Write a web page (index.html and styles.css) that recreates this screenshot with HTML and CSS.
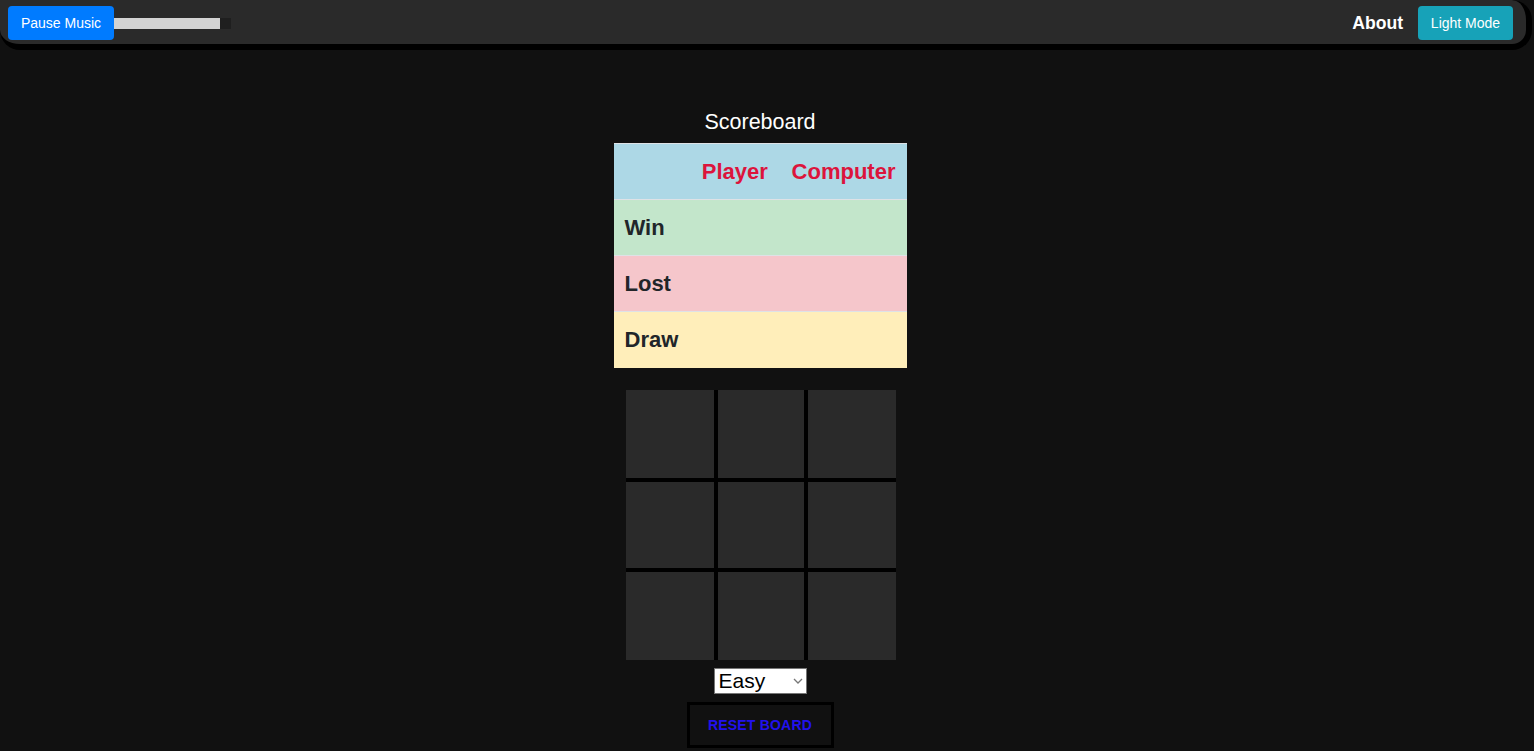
FILE: index.html
```html
<!DOCTYPE html>
<html lang="en">
<head>
<meta charset="utf-8">
<title>Tic Tac Toe</title>
<link rel="stylesheet" href="styles.css">
</head>
<body>
<nav class="navbar">
  <div class="nav-left">
    <button class="btn btn-music">Pause Music</button>
    <div class="volume"><div class="volume-fill"></div></div>
  </div>
  <div class="nav-right">
    <a class="about" href="#">About</a>
    <button class="btn btn-mode">Light Mode</button>
  </div>
</nav>
<main class="main">
  <h2 class="score-title">Scoreboard</h2>
  <table class="scoreboard">
    <thead>
      <tr class="row-head"><th></th><th>Player</th><th>Computer</th></tr>
    </thead>
    <tbody>
      <tr class="row-win"><td>Win</td><td></td><td></td></tr>
      <tr class="row-lost"><td>Lost</td><td></td><td></td></tr>
      <tr class="row-draw"><td>Draw</td><td></td><td></td></tr>
    </tbody>
  </table>
  <div class="board">
    <div class="cell c-tl"></div><div class="cell c-tm"></div><div class="cell c-tr"></div>
    <div class="cell c-ml"></div><div class="cell c-mm"></div><div class="cell c-mr"></div>
    <div class="cell c-bl"></div><div class="cell c-bm"></div><div class="cell c-br"></div>
  </div>
  <div class="select-wrap">
    <select class="difficulty">
      <option>Easy</option>
      <option>Medium</option>
      <option>Hard</option>
    </select>
    <svg class="chev" width="10" height="6" viewBox="0 0 10 6"><path d="M1 1 L5 5 L9 1" fill="none" stroke="#777" stroke-width="1.3"/></svg>
  </div>
  <button class="reset">RESET BOARD</button>
</main>
</body>
</html>
```

FILE: styles.css
```css
* { box-sizing: border-box; }
html, body { margin: 0; padding: 0; }
body {
  background: #111111;
  font-family: "Liberation Sans", Arial, sans-serif;
  color: #fff;
  overflow: hidden;
}
.navbar {
  width: calc(100% - 2px);
  height: 50px;
  background: #2a2a2a;
  border-right: 6px solid #000;
  border-bottom: 6px solid #000;
  border-radius: 0 20px 20px 20px;
  display: flex;
  align-items: flex-start;
  justify-content: space-between;
  padding: 6px 13px 0 8px;
}
.nav-left, .nav-right { display: flex; align-items: center; height: 34px; }
.btn {
  height: 34px;
  border: none;
  border-radius: 4px;
  color: #fff;
  font-family: "Liberation Sans", Arial, sans-serif;
  font-size: 14px;
  padding: 0 12px;
  cursor: pointer;
}
.btn-music { background: #007bff; width: 106px; }
.btn-mode { background: #17a2b8; width: 95px; }
.volume { width: 117px; height: 11px; background: #1f1f1f; }
.volume-fill { width: 106px; height: 100%; background: #d3d3d3; }
.about {
  color: #fff;
  font-weight: bold;
  font-size: 17.6px;
  text-decoration: none;
  margin-right: 15px;
}
.main {
  display: flex;
  flex-direction: column;
  align-items: center;
  padding: 59px 14px 0 0;
}
.score-title {
  margin: 0 0 7px 0;
  font-weight: normal;
  font-size: 21.5px;
  line-height: 27px;
  color: #fff;
}
.scoreboard {
  border-collapse: collapse;
  width: 293px;
}
.scoreboard th, .scoreboard td {
  padding: 12px 11px;
  height: 56px;
  font-size: 22px;
  font-weight: bold;
  line-height: 31px;
  border-top: 1px solid #dee2e6;
  text-align: left;
}
.scoreboard th { color: #dc143c; text-align: right; }
.row-head { background: #add8e6; }
.row-win { background: #c3e6cb; }
.row-lost { background: #f5c6cb; }
.row-draw { background: #ffeeba; }
.scoreboard td { color: #212529; }
.scoreboard th:first-child, .scoreboard td:first-child { width: 76px; }
.board {
  margin: 22px 0 0 2px;
  display: grid;
  grid-template-columns: repeat(3, 90px);
  grid-template-rows: repeat(3, 90px);
}
.cell { background: #2a2a2a; border: 0 solid #000; }
.c-tl { border-right-width: 2px; border-bottom-width: 2px; }
.c-tm { border-left-width: 2px; border-right-width: 2px; border-bottom-width: 2px; }
.c-tr { border-left-width: 2px; border-bottom-width: 2px; }
.c-ml { border-top-width: 2px; border-right-width: 2px; border-bottom-width: 2px; }
.c-mm { border-width: 2px; }
.c-mr { border-top-width: 2px; border-left-width: 2px; border-bottom-width: 2px; }
.c-bl { border-top-width: 2px; border-right-width: 2px; }
.c-bm { border-top-width: 2px; border-left-width: 2px; border-right-width: 2px; }
.c-br { border-top-width: 2px; border-left-width: 2px; }
.select-wrap { position: relative; margin-top: 8px; width: 93px; height: 26px; }
.difficulty {
  appearance: none;
  -webkit-appearance: none;
  width: 93px;
  height: 26px;
  border: 1px solid #767676;
  border-radius: 0;
  background: #fff;
  color: #000;
  font-family: "Liberation Sans", Arial, sans-serif;
  font-size: 21px;
  padding: 0 0 0 4px;
  line-height: 24px;
}
.chev { position: absolute; right: 4px; top: 10px; pointer-events: none; }
.reset {
  margin-top: 8px;
  width: 147px;
  height: 46px;
  background: #111111;
  border: 3px solid #000;
  color: #2211ee;
  font-family: "Liberation Sans", Arial, sans-serif;
  font-weight: bold;
  font-size: 14px;
  letter-spacing: 0.2px;
  padding: 0;
}
```
